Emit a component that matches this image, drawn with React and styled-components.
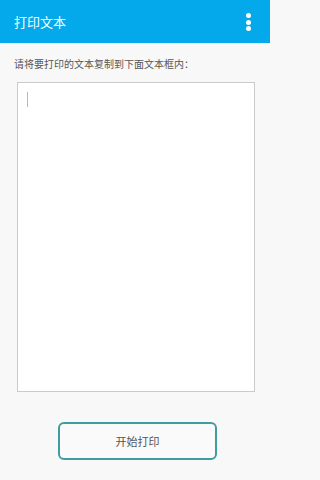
import React from 'react'
import styled, { createGlobalStyle } from 'styled-components';

const GlobalStyle = createGlobalStyle`
  html, body {
    margin: 0;
    padding: 0;
    background: #f8f8f8;
  }
  body {
    font-family: "Noto Sans CJK SC", "Noto Sans", sans-serif;
  }
`;

const Page = styled.div`
  width: 270px;
  height: 480px;
  display: flex;
  flex-direction: column;
  background: #f8f8f8;
  overflow: hidden;
`;

const Toolbar = styled.div`
  height: 43px;
  flex-shrink: 0;
  background: #03a9ea;
  display: flex;
  align-items: center;
  justify-content: space-between;
  padding: 0 19px 0 14px;
`;

const Title = styled.h1`
  margin: 0;
  font-size: 13px;
  font-weight: 400;
  color: #fff;
  line-height: 1;
`;

const MenuDots = styled.div`
  display: flex;
  flex-direction: column;
  gap: 1.5px;
  margin-top: 1px;

  span {
    width: 5px;
    height: 5px;
    border-radius: 50%;
    background: #fff;
  }
`;

const Body = styled.div`
  flex: 1;
  display: flex;
  flex-direction: column;
  padding: 15px 15px 20px 14px;
`;

const Hint = styled.p`
  margin: 0;
  font-size: 10px;
  line-height: 12px;
  color: #555;
`;

const BoxFrame = styled.div`
  margin: 12px 0 0 3px;
  height: 310px;
  box-sizing: border-box;
  border: 1px solid #cacaca;
  background: #fff;
`;

const Caret = styled.div`
  width: 1px;
  height: 15px;
  background: #b8b8b8;
  margin: 9px 0 0 9px;
`;

const Footer = styled.div`
  margin-top: auto;
  display: flex;
  justify-content: center;
  padding-left: 6px;
`;

const PrintButton = styled.button`
  width: 159px;
  height: 38px;
  box-sizing: border-box;
  border: 2px solid #3f9d9f;
  border-radius: 6px;
  background: #fafafa;
  font-family: inherit;
  font-size: 11px;
  color: #555;
  cursor: pointer;
`;

export default function App() {
  return (
    <>
      <GlobalStyle />
      <Page>
        <Toolbar>
          <Title>打印文本</Title>
          <MenuDots>
            <span /><span /><span />
          </MenuDots>
        </Toolbar>
        <Body>
          <Hint>请将要打印的文本复制到下面文本框内：</Hint>
          <BoxFrame>
            <Caret />
          </BoxFrame>
          <Footer>
            <PrintButton>开始打印</PrintButton>
          </Footer>
        </Body>
      </Page>
    </>
  )
}
